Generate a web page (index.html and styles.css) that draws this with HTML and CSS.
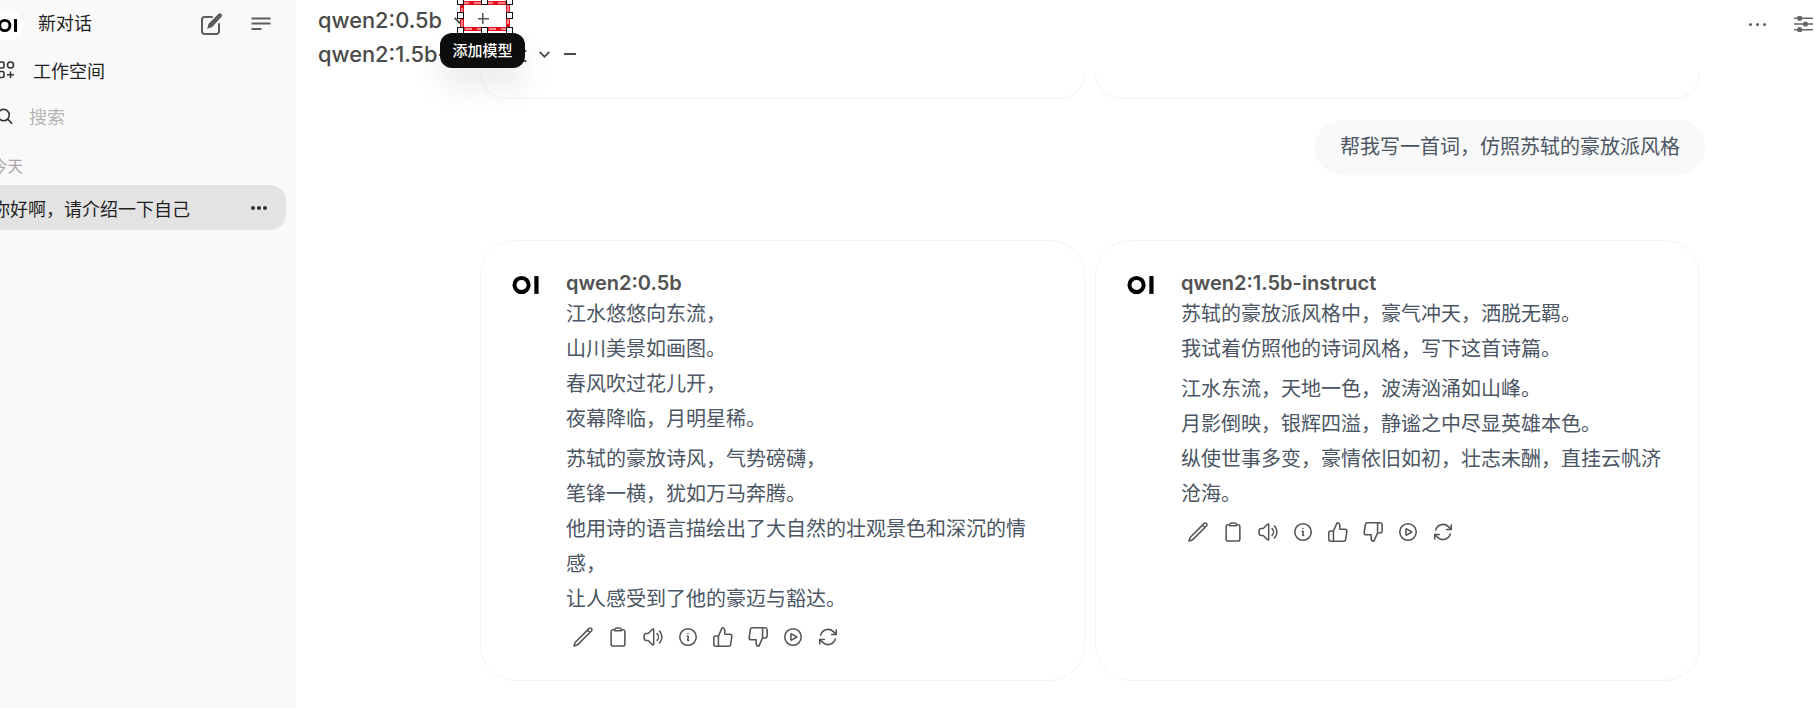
FILE: index.html
```html
<!DOCTYPE html>
<html lang="zh-CN">
<head>
    <meta charset="UTF-8">
    <title>新对话</title>
    <link rel="stylesheet" href="styles.css">
</head>
<body>
    <svg class="defs" width="0" height="0">
        <symbol id="i-pencil" viewBox="0 0 24 24"><path d="m16.862 4.487 1.687-1.688a1.875 1.875 0 1 1 2.652 2.652L6.832 19.82a4.5 4.5 0 0 1-1.897 1.13l-2.685.8.8-2.685a4.5 4.5 0 0 1 1.13-1.897L16.863 4.487Zm0 0L19.5 7.125"/></symbol>
        <symbol id="i-clip" viewBox="0 0 24 24"><path d="M15.666 3.888A2.25 2.25 0 0 0 13.5 2.25h-3c-1.03 0-1.9.693-2.166 1.638m7.332 0c.055.194.084.4.084.612v0a.75.75 0 0 1-.75.75H9a.75.75 0 0 1-.75-.75v0c0-.212.03-.418.084-.612m7.332 0c.646.049 1.288.11 1.927.184 1.1.128 1.907 1.077 1.907 2.185V19.5a2.25 2.25 0 0 1-2.25 2.25H6.75A2.25 2.25 0 0 1 4.5 19.5V6.257c0-1.108.806-2.057 1.907-2.185a48.208 48.208 0 0 1 1.927-.184"/></symbol>
        <symbol id="i-speaker" viewBox="0 0 24 24"><path d="M19.114 5.636a9 9 0 010 12.728M16.463 8.288a5.25 5.25 0 010 7.424M6.75 8.25l4.72-4.72a.75.75 0 011.28.53v15.88a.75.75 0 01-1.28.53l-4.72-4.72H4.51c-.88 0-1.704-.507-1.938-1.354A9.01 9.01 0 012.25 12c0-.83.112-1.633.322-2.396C2.806 8.756 3.63 8.25 4.51 8.25H6.75z"/></symbol>
        <symbol id="i-info" viewBox="0 0 24 24"><path d="M11.25 11.25l.041-.02a.75.75 0 011.063.852l-.708 2.836a.75.75 0 001.063.853l.041-.021M21 12a9 9 0 11-18 0 9 9 0 0118 0zm-9-3.75h.008v.008H12V8.25z"/></symbol>
        <symbol id="i-up" viewBox="0 0 24 24"><path d="M14 9V5a3 3 0 0 0-3-3l-4 9v11h11.28a2 2 0 0 0 2-1.7l1.38-9a2 2 0 0 0-2-2.3zM7 22H4a2 2 0 0 1-2-2v-7a2 2 0 0 1 2-2h3"/></symbol>
        <symbol id="i-down" viewBox="0 0 24 24"><path d="M10 15v4a3 3 0 0 0 3 3l4-9V2H5.72a2 2 0 0 0-2 1.7l-1.38 9a2 2 0 0 0 2 2.3zm7-13h2.67A2.31 2.31 0 0 1 22 4v7a2.31 2.31 0 0 1-2.33 2H17"/></symbol>
        <symbol id="i-play" viewBox="0 0 24 24"><path d="M21 12a9 9 0 11-18 0 9 9 0 0118 0z"/><path d="M15.91 11.672a.375.375 0 010 .656l-5.603 3.113a.375.375 0 01-.557-.328V8.887c0-.286.307-.466.557-.327l5.603 3.112z"/></symbol>
        <symbol id="i-redo" viewBox="0 0 24 24"><path d="M16.023 9.348h4.992v-.001M2.985 19.644v-4.992m0 0h4.992m-4.993 0l3.181 3.183a8.25 8.25 0 0013.803-3.7M4.031 9.865a8.25 8.25 0 0113.803-3.7l3.181 3.182m0-4.991v4.99"/></symbol>
        <symbol id="i-logo" viewBox="0 0 25 18"><circle cx="8.5" cy="9" r="6.4" fill="none" stroke="currentColor" stroke-width="3.6"/><rect x="20" y="1" width="3.8" height="16" fill="currentColor"/></symbol>
    </svg>

    <aside class="sidebar">
        <div class="side-top">
            <span class="side-logo"><svg class="logo-small"><use href="#i-logo"/></svg></span>
            <span class="side-new">新对话</span>
            <svg class="edit" viewBox="0 0 22 22"><path d="M12 4H4.5A2.5 2.5 0 0 0 2 6.500V18.500A2.500 2.500 0 0 0 4.500 21H16.500A2.500 2.500 0 0 0 19 18.500V11"/><path class="solid" d="M18.300 .9a2.100 2.100 0 0 1 3 3l-8.800 9.800a3 3 0 0 1-1.300.8l-4 1.200 1.100-4.100a3 3 0 0 1 .8-1.300z"/></svg>
            <svg class="bars" viewBox="0 0 20 14"><path d="M.5 1.500h19M.5 6.500h19M.5 12h10"/></svg>
        </div>
        <div class="side-row workspace">
            <svg class="grid-icon" viewBox="0 0 18 18"><rect x="1" y="1" width="6" height="6" rx="1.600"/><circle cx="13.500" cy="4" r="3"/><rect x="1" y="10.500" width="6" height="6" rx="1.600"/><path d="M13.500 10.500v6.500M10 13.700h7"/></svg>
            <span>工作空间</span>
        </div>
        <div class="side-row search">
            <svg class="search-icon" viewBox="0 0 18 18"><circle cx="7" cy="7.500" r="6"/><path d="M11.500 12l4 4"/></svg>
            <span>搜索</span>
        </div>
        <div class="side-date">今天</div>
        <div class="side-chat">
            <span>你好啊，请介绍一下自己</span>
            <span class="more dark"><i></i><i></i><i></i></span>
        </div>
    </aside>

    <main class="main">
        <header class="topbar">
            <div class="model-row">
                <span class="model-name">qwen2:0.5b</span>
                <svg class="chevron" viewBox="0 0 12 8"><path d="M1.500 1.500 6 6l4.500-4.500"/></svg>
            </div>
            <div class="model-row">
                <span class="model-name">qwen2:1.5b-instruct</span>
                <svg class="chevron" viewBox="0 0 12 8"><path d="M1.500 1.500 6 6l4.500-4.500"/></svg>
                <span class="minus"></span>
            </div>
            <div class="top-actions">
                <span class="more"><i></i><i></i><i></i></span>
                <svg class="sliders" viewBox="0 0 20 16"><path d="M0 2h20M0 8h20M0 14h20"/><circle cx="6" cy="2" r="2"/><circle cx="12" cy="8" r="2"/><circle cx="6" cy="14" r="2"/></svg>
            </div>

            <div class="select-box">
                <svg class="select-dash"><rect x="2" y="2" width="46" height="26"/></svg>
                <span class="plus"></span>
                <i class="h tl"></i><i class="h tc"></i><i class="h tr"></i>
                <i class="h ml"></i><i class="h mr"></i>
                <i class="h bl"></i><i class="h bc"></i><i class="h br"></i>
            </div>
            <div class="tooltip">添加模型</div>
        </header>

        <section class="chat">
            <div class="stubs">
                <div class="stub"></div>
                <div class="stub"></div>
            </div>

            <div class="user-msg">帮我写一首词，仿照苏轼的豪放派风格</div>

            <div class="replies">
                <article class="card">
                    <svg class="card-logo"><use href="#i-logo"/></svg>
                    <div class="card-body">
                        <div class="card-name">qwen2:0.5b</div>
                        <p>江水悠悠向东流，<br>山川美景如画图。<br>春风吹过花儿开，<br>夜幕降临，月明星稀。</p>
                        <p>苏轼的豪放诗风，气势磅礴，<br>笔锋一横，犹如万马奔腾。<br>他用诗的语言描绘出了大自然的壮观景色和深沉的情感，<br>让人感受到了他的豪迈与豁达。</p>
                        <div class="actions">
                            <svg><use href="#i-pencil"/></svg>
                            <svg><use href="#i-clip"/></svg>
                            <svg><use href="#i-speaker"/></svg>
                            <svg><use href="#i-info"/></svg>
                            <svg><use href="#i-up"/></svg>
                            <svg><use href="#i-down"/></svg>
                            <svg><use href="#i-play"/></svg>
                            <svg><use href="#i-redo"/></svg>
                        </div>
                    </div>
                </article>
                <article class="card">
                    <svg class="card-logo"><use href="#i-logo"/></svg>
                    <div class="card-body">
                        <div class="card-name">qwen2:1.5b-instruct</div>
                        <p>苏轼的豪放派风格中，豪气冲天，洒脱无羁。<br>我试着仿照他的诗词风格，写下这首诗篇。</p>
                        <p>江水东流，天地一色，波涛汹涌如山峰。<br>月影倒映，银辉四溢，静谧之中尽显英雄本色。<br>纵使世事多变，豪情依旧如初，壮志未酬，直挂云帆济沧海。</p>
                        <div class="actions">
                            <svg><use href="#i-pencil"/></svg>
                            <svg><use href="#i-clip"/></svg>
                            <svg><use href="#i-speaker"/></svg>
                            <svg><use href="#i-info"/></svg>
                            <svg><use href="#i-up"/></svg>
                            <svg><use href="#i-down"/></svg>
                            <svg><use href="#i-play"/></svg>
                            <svg><use href="#i-redo"/></svg>
                        </div>
                    </div>
                </article>
            </div>
        </section>
    </main>
</body>
</html>
```

FILE: styles.css
```css
:root {
    --text-color: #4b5563;
    --icon-color: #555;
    --card-border: #f3f3f3;
    --cjk: Inter, 'Noto Sans CJK SC', sans-serif;
}

* {
    margin: 0;
    padding: 0;
    box-sizing: border-box;
    font-family: var(--cjk);
}

html, body {
    height: 708px;
    overflow: hidden;
}

body {
    display: flex;
    background: white;
    color: var(--text-color);
}

.defs {
    position: absolute;
}

/* Sidebar */
.sidebar {
    flex: 0 0 296px;
    height: 708px;
    background: #f9f9f9;
    color: #1f1f1f;
    overflow: hidden;
    padding: 10px 10px 0 0;
}

.side-top {
    display: flex;
    align-items: center;
    height: 30px;
    margin-left: -7px;
}

.side-logo {
    display: flex;
    align-items: center;
    justify-content: center;
    width: 30px;
    height: 30px;
    border-radius: 50%;
    background: white;
    color: black;
}

.logo-small {
    width: 20px;
    height: 15px;
}

.side-new {
    flex: 1;
    margin-left: 15px;
    padding-bottom: 6px;
    font-size: 18px;
}

.edit {
    width: 22px;
    height: 22px;
    margin-top: -2px;
    fill: none;
    stroke: #5c5c5c;
    stroke-width: 2;
    stroke-linecap: round;
}

.edit .solid {
    fill: #5c5c5c;
    stroke: none;
}

.bars {
    width: 20px;
    height: 14px;
    margin: -2px 15px 0 29px;
    fill: none;
    stroke: #5c5c5c;
    stroke-width: 2;
}

.side-row {
    display: flex;
    align-items: center;
    height: 30px;
    font-size: 18px;
}

.workspace {
    margin-top: 15px;
    margin-left: -3px;
    gap: 18px;
}

.grid-icon {
    width: 18px;
    height: 18px;
    fill: none;
    stroke: #333;
    stroke-width: 1.6;
}

.search {
    margin-top: 16px;
    margin-left: -3px;
    gap: 15px;
    color: #b5b5b5;
}

.search-icon {
    width: 17px;
    height: 17px;
    fill: none;
    stroke: #333;
    stroke-width: 1.7;
    stroke-linecap: round;
}

.side-date {
    margin-top: 26px;
    margin-left: -8px;
    font-size: 15.5px;
    line-height: 20px;
    color: #a8a8a8;
}

.side-chat {
    display: flex;
    align-items: center;
    justify-content: space-between;
    height: 45px;
    margin-top: 8px;
    margin-left: -20px;
    padding: 0 19px 0 20px;
    border-radius: 16px;
    background: #e3e3e3;
    font-size: 18px;
}

.side-chat span:first-child {
    margin-left: -8px;
}

.more {
    display: flex;
    gap: 4px;
}

.more i {
    width: 3px;
    height: 3px;
    border-radius: 50%;
    background: #5f5f5f;
}

.more.dark {
    gap: 2px;
}

.more.dark i {
    width: 4px;
    height: 4px;
    background: #333;
}

/* Main */
.main {
    flex: 1;
    min-width: 0;
}

.topbar {
    position: relative;
    height: 73px;
    padding: 3px 0 0 22px;
}

.model-row {
    display: flex;
    align-items: center;
    height: 34px;
    gap: 11px;
}

.model-name {
    font-size: 21.8px;
    font-weight: 500;
    color: #4a4a4a;
}

.chevron {
    width: 13px;
    height: 9px;
    fill: none;
    stroke: #4a4a4a;
    stroke-width: 1.6;
}

.minus {
    width: 12px;
    height: 1.5px;
    background: #4a4a4a;
    margin-left: 2px;
}

.top-actions {
    position: absolute;
    right: 1px;
    top: 16px;
    display: flex;
    align-items: center;
    gap: 28px;
}

.sliders {
    width: 19px;
    height: 16px;
    fill: #666;
    stroke: #666;
    stroke-width: 1.5;
}

/* the red selection box a screenshot editor left on the add button */
.select-box {
    position: absolute;
    left: 164px;
    top: 1px;
    width: 50px;
    height: 30px;
    border: 4px solid #e8101c;
    background: white;
    display: flex;
    align-items: center;
    justify-content: center;
    padding: 5px 4px 0 0;
}

.select-dash {
    position: absolute;
    left: -4px;
    top: -4px;
    width: 50px;
    height: 30px;
    fill: none;
    stroke: white;
    stroke-width: 1;
    stroke-dasharray: 7 5;
}

.plus {
    width: 11px;
    height: 11px;
    background:
        linear-gradient(#555, #555) center / 100% 1.5px no-repeat,
        linear-gradient(#555, #555) center / 1.5px 100% no-repeat;
}

.h {
    position: absolute;
    width: 7px;
    height: 7px;
    background: white;
    border: 1px solid #111;
}

.tl { left: -7px; top: -7px; }
.tc { left: 17px; top: -7px; }
.tr { right: -7px; top: -7px; }
.ml { left: -7px; top: 7px; }
.mr { right: -7px; top: 7px; }
.bl { left: -7px; bottom: -7px; }
.bc { left: 17px; bottom: -7px; }
.br { right: -7px; bottom: -7px; }

.tooltip {
    position: absolute;
    left: 144px;
    top: 33px;
    width: 85px;
    height: 35px;
    border-radius: 12px;
    background: #0d0d0d;
    color: white;
    font-size: 15px;
    font-weight: 500;
    line-height: 35px;
    text-align: center;
    box-shadow: 0 18px 32px rgba(0, 0, 0, 0.09);
}

/* Chat column */
.chat {
    margin-left: 184px;
    width: 1225px;
}

.stubs,
.replies {
    display: grid;
    grid-template-columns: 605px 605px;
    gap: 10px;
}

.stub {
    height: 26px;
    border: 1px solid var(--card-border);
    border-top: none;
    border-radius: 0 0 30px 30px;
}

.user-msg {
    width: fit-content;
    margin: 21px 0 0 auto;
    padding: 0 25px;
    line-height: 55px;
    border-radius: 27px;
    background: #f9f9f9;
    font-size: 20px;
}

.replies {
    margin-top: 65px;
}

.card {
    display: flex;
    height: 441px;
    padding: 28px 0 0 31px;
    border: 1px solid var(--card-border);
    border-radius: 36px;
}

.card-logo {
    flex: 0 0 28px;
    width: 28px;
    height: 20px;
    margin-top: 6px;
    color: black;
}

.card-body {
    width: 490px;
    margin-left: 26px;
    font-size: 20px;
    line-height: 35px;
}

.card-name {
    font-size: 20px;
    font-weight: 600;
    line-height: 28px;
    color: #525252;
}

.card-body p {
    margin-bottom: 5px;
}

.actions {
    display: flex;
    gap: 13px;
    margin: 9px 0 0 6px;
}

.actions svg {
    width: 22px;
    height: 22px;
    fill: none;
    stroke: var(--icon-color);
    stroke-width: 1.7;
    stroke-linecap: round;
    stroke-linejoin: round;
}
```
